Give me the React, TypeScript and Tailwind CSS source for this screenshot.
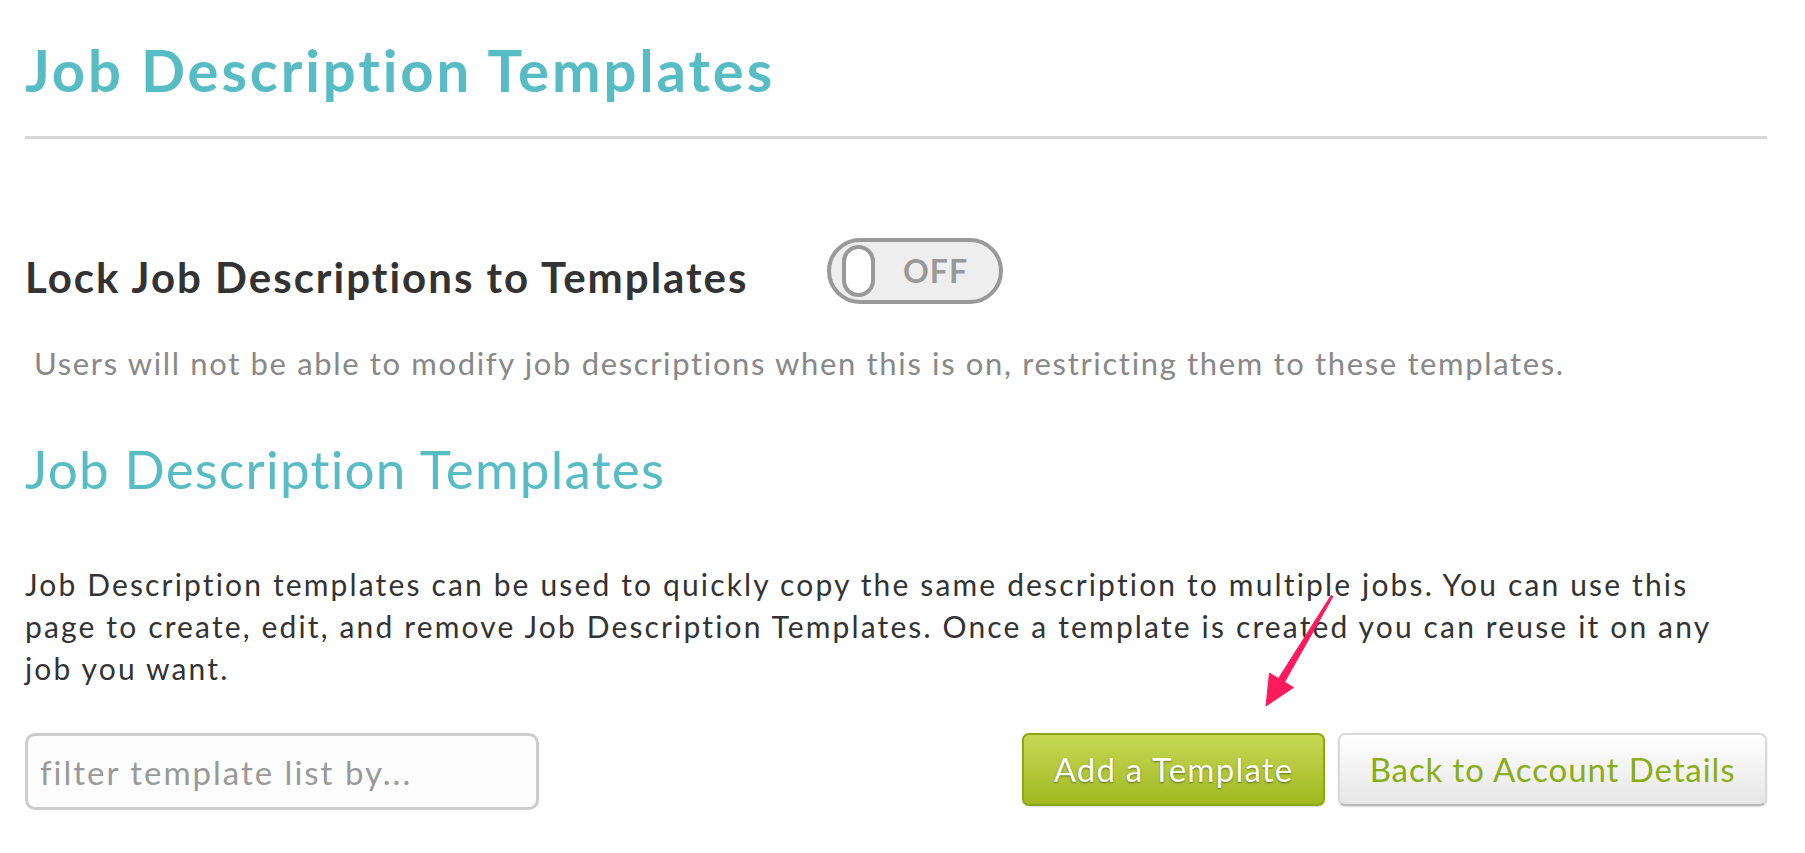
import React, { useState } from 'react';

// Simple on/off switch, drawn in the old pill style
const LockToggle: React.FC<{ on: boolean; onToggle: () => void }> = ({ on, onToggle }) => (
  <button
    onClick={onToggle}
    className="relative flex items-center w-[176px] h-[66px] rounded-full border-[4px] border-[#999999] bg-[#eeeeee] shrink-0"
  >
    <span className="ml-[11px] w-[33px] h-[52px] rounded-full border-[4px] border-[#999999] bg-white" />
    <span className="ml-[28px] text-[32px] font-bold text-[#999999] leading-none tracking-[1px]">{on ? 'ON' : 'OFF'}</span>
  </button>
);

export default function App() {
  const [locked, setLocked] = useState(false);
  const [filter, setFilter] = useState('');

  return (
    <div className="relative min-h-screen bg-white pl-[25px] pr-[38px] font-['Lato','Liberation_Sans',sans-serif]">
      {/* Page title */}
      <h1 className="pt-[35px] text-[58px] leading-[70px] font-bold tracking-[2.9px] text-[#57bcc4]">
        Job Description Templates
      </h1>
      <div className="mt-[31px] h-[3px] bg-[#d6d6d6]" />

      {/* Lock setting */}
      <div className="mt-[99px] flex items-start">
        <h3 className="mt-[14px] w-[802px] text-[42px] leading-[50px] font-bold tracking-[2px] text-[#333333]">
          Lock Job Descriptions to Templates
        </h3>
        <LockToggle on={locked} onToggle={() => setLocked(!locked)} />
      </div>
      <p className="mt-[41px] pl-[9px] text-[31px] leading-[36px] tracking-[1.65px] text-[#888888]">
        Users will not be able to modify job descriptions when this is on, restricting them to these templates.
      </p>

      {/* Templates section */}
      <h2 className="mt-[56px] text-[53px] leading-[64px] font-normal tracking-[1.2px] text-[#57bcc4]">
        Job Description Templates
      </h2>
      <p className="mt-[62px] text-[30px] leading-[42px] tracking-[2.15px] text-[#333333]">
        Job Description templates can be used to quickly copy the same description to multiple jobs. You can use this
        page to create, edit, and remove Job Description Templates. Once a template is created you can reuse it on any
        job you want.
      </p>

      <div className="mt-[44px] flex items-start justify-between">
        <input
          value={filter}
          onChange={(e) => setFilter(e.target.value)}
          placeholder="filter template list by..."
          className="w-[514px] h-[77px] rounded-[10px] border-[3px] border-[#cccccc] bg-[#fdfdfd] pl-[12px] text-[33px] tracking-[2px] text-[#333333] placeholder:text-[#999999] focus:outline-none"
        />
        <div className="flex gap-[13px]">
          <button className="w-[303px] h-[73px] rounded-[7px] border-[2px] border-[#8ba616] bg-gradient-to-b from-[#c6d853] to-[#a0b91c] text-[33px] tracking-[1.2px] text-white [text-shadow:0_1px_2px_rgba(0,0,0,0.45)] shadow-[0_1px_2px_rgba(0,0,0,0.15)]">
            Add a Template
          </button>
          <button className="w-[429px] h-[73px] rounded-[7px] border-[2px] border-[#d9d9d9] border-b-[#b8b8b8] bg-gradient-to-b from-white to-[#e6e6e6] text-[33px] tracking-[0.9px] text-[#8aad16] shadow-[0_1px_2px_rgba(0,0,0,0.15)]">
            Back to Account Details
          </button>
        </div>
      </div>

      {/* Annotation arrow pointing at the add button */}
      <svg className="absolute left-[1240px] top-[580px]" width="110" height="140" viewBox="0 0 110 140">
        <polygon
          points="91.1,15.5 92.9,16.5 44.5,102.1 53.5,107.5 26,126 29.5,93.1 38.5,98.5"
          fill="#ff1a5e"
          stroke="#ff1a5e"
          strokeWidth="1"
          strokeLinejoin="round"
        />
      </svg>
    </div>
  );
}
